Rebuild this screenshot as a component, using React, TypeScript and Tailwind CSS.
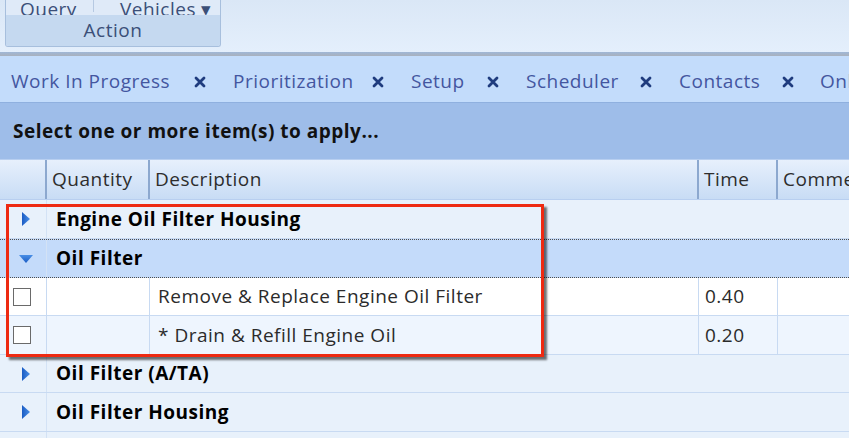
import React from "react";

const tabs = [
  { label: "Work In Progress", w: "w-[222px]" },
  { label: "Prioritization", w: "w-[178px]" },
  { label: "Setup", w: "w-[115px]" },
  { label: "Scheduler", w: "w-[153px]" },
  { label: "Contacts", w: "w-[142px]" },
];

function CloseX() {
  return (
    <svg width="12" height="12" viewBox="0 0 12 12" className="shrink-0">
      <path d="M2 2 L10 10 M10 2 L2 10" stroke="#1f3c7e" strokeWidth="2.8" strokeLinecap="round" />
    </svg>
  );
}

function ArrowRight() {
  return (
    <svg width="10" height="16" viewBox="0 0 10 16">
      <defs>
        <linearGradient id="ar" x1="0" y1="0" x2="1" y2="0">
          <stop offset="0" stopColor="#1a5cc4" />
          <stop offset="1" stopColor="#4a8fe6" />
        </linearGradient>
      </defs>
      <path d="M1 1 L9 8 L1 15 Z" fill="url(#ar)" />
    </svg>
  );
}

function ArrowDown() {
  return (
    <svg width="16" height="10" viewBox="0 0 16 10">
      <defs>
        <linearGradient id="ad" x1="0" y1="0" x2="0" y2="1">
          <stop offset="0" stopColor="#4a8fe6" />
          <stop offset="1" stopColor="#1a5cc4" />
        </linearGradient>
      </defs>
      <path d="M1 1 L15 1 L8 9 Z" fill="url(#ad)" />
    </svg>
  );
}

function GroupRow({ label, h, open }: { label: string; h: string; open?: boolean }) {
  return (
    <div
      className={`flex ${h} ${
        open
          ? "bg-[#c4dbfa] border-y border-dotted border-[#4d4d4d]"
          : "bg-[#e8f1fb] border-b border-[#c8daf2]"
      }`}
    >
      <div className="w-[47px] shrink-0 flex items-center justify-center pl-[6px] border-r border-[#d3e2f5]">
        {open ? <ArrowDown /> : <ArrowRight />}
      </div>
      <div className="flex-1 flex items-center pl-[9px] font-bold text-[19px] tracking-[0.5px] text-black">{label}</div>
    </div>
  );
}

function ItemRow({ desc, time, h, bg }: { desc: string; time: string; h: string; bg: string }) {
  return (
    <div className={`flex ${h} ${bg} border-b border-[#c8daf2] text-[19px] tracking-[0.5px] text-[#2b2b2b]`}>
      <div className="w-[47px] shrink-0 flex items-center pl-[13px] border-r border-[#c8daf2]">
        <div className="w-[18px] h-[18px] border border-[#6a6a6a] bg-white" />
      </div>
      <div className="w-[103px] shrink-0 border-r border-[#c8daf2]" />
      <div className="w-[549px] shrink-0 flex items-center pl-[8px] border-r border-[#c8daf2]">{desc}</div>
      <div className="w-[79px] shrink-0 flex items-center pl-[6px] border-r border-[#c8daf2]">{time}</div>
      <div className="flex-1" />
    </div>
  );
}

export default function App() {
  return (
    <div className="w-[849px] h-[438px] overflow-hidden bg-white font-['Open_Sans',sans-serif]">
      {/* ribbon */}
      <div className="h-[52px] bg-gradient-to-b from-[#dae7f6] to-[#e4effc] flex px-[5px] overflow-hidden">
        <div className="w-[216px] h-[47px] border border-t-0 border-[#a7bfdd] rounded-b-[3px] flex flex-col overflow-hidden">
          <div className="h-[15px] bg-[#dfeaf8] flex items-end text-[19px] tracking-[0.5px] text-[#3b4f78] leading-none">
            <span className="ml-[14px] -mb-[4px]">Query</span>
            <span className="ml-[16px] mb-[3px] w-px h-[12px] bg-[#b6c9e2]" />
            <span className="ml-[26px] -mb-[4px]">Vehicles ▾</span>
          </div>
          <div className="flex-1 bg-[#c5d9f0] flex items-center justify-center text-[19px] tracking-[0.5px] text-[#3b4f78]">Action</div>
        </div>
      </div>
      <div className="h-[4px] bg-gradient-to-b from-[#9fb7d7] to-[#a9b1bd]" />

      {/* tabs */}
      <div className="h-[46px] bg-[#c3dcfb] flex items-center pt-[5px] text-[19px] tracking-[0.5px] text-[#4356a0] whitespace-nowrap">
        {tabs.map((t) => (
          <div key={t.label} className={`${t.w} shrink-0 flex items-center pl-[11px] pr-[16px]`}>
            <span>{t.label}</span>
            <span className="ml-auto">
              <CloseX />
            </span>
          </div>
        ))}
        <div className="pl-[10px]">Online</div>
      </div>

      {/* instruction bar */}
      <div className="h-[57px] bg-[#9ebde9] border-t border-[#8fb0df] flex items-center pl-[13px] text-[19px] tracking-[0.5px] font-bold text-[#111]">
        Select one or more item(s) to apply...
      </div>

      {/* column headers */}
      <div className="h-[41px] flex bg-gradient-to-b from-[#e7f0fc] to-[#c8dcf5] border-t border-[#b8cff0] border-b border-[#8ca8cf] text-[19px] tracking-[0.5px] text-[#2d2d2d]">
        <div className="w-[47px] shrink-0 border-r-2 border-[#8ca8cf]" />
        <div className="w-[103px] shrink-0 border-r-2 border-[#8ca8cf] flex items-center pl-[5px]">Quantity</div>
        <div className="w-[549px] shrink-0 border-r-2 border-[#8ca8cf] flex items-center pl-[5px]">Description</div>
        <div className="w-[79px] shrink-0 border-r-2 border-[#8ca8cf] flex items-center pl-[5px]">Time</div>
        <div className="flex-1 flex items-center pl-[5px]">Comments</div>
      </div>

      {/* rows */}
      <div className="relative">
        <GroupRow label="Engine Oil Filter Housing" h="h-[39px]" />
        <GroupRow label="Oil Filter" h="h-[39px]" open />
        <ItemRow desc="Remove & Replace Engine Oil Filter" time="0.40" h="h-[38px]" bg="bg-white" />
        <ItemRow desc="* Drain & Refill Engine Oil" time="0.20" h="h-[39px]" bg="bg-[#eef5fe]" />
        <GroupRow label="Oil Filter (A/TA)" h="h-[38px]" />
        <GroupRow label="Oil Filter Housing" h="h-[39px]" />
        <GroupRow label="Oil Pan" h="h-[39px]" />

        {/* highlight annotation */}
        <div className="absolute left-[6px] top-[4px] w-[538px] h-[153px] border-[3px] border-[#ee2a12] shadow-[3px_3px_2px_rgba(0,0,0,0.55)] pointer-events-none" />
      </div>
    </div>
  );
}
